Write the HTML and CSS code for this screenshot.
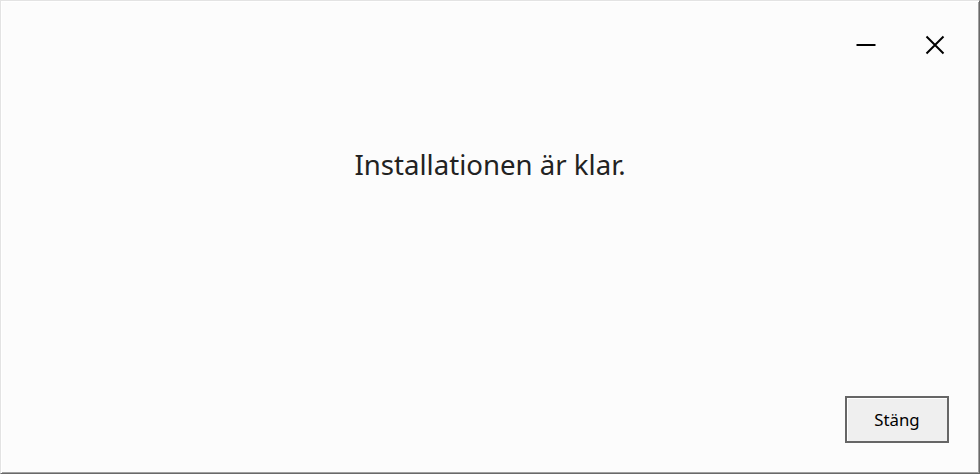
FILE: index.html
```html
<!DOCTYPE html>
<html lang="sv">
<head>
<meta charset="utf-8">
<title>Installation</title>
<link rel="stylesheet" href="styles.css">
</head>
<body>
<div class="window">
  <div class="titlebar">
    <button class="ctl" aria-label="Minimera">
      <svg width="20" height="20" viewBox="0 0 20 20"><rect x="0.5" y="9" width="19" height="2" fill="#000"/></svg>
    </button>
    <button class="ctl" aria-label="Stäng">
      <svg width="20" height="20" viewBox="0 0 20 20"><path d="M1.5 1.5 L18.5 18.5 M18.5 1.5 L1.5 18.5" stroke="#000" stroke-width="2" fill="none"/></svg>
    </button>
  </div>
  <div class="content">
    <p class="message">Installationen är klar.</p>
  </div>
  <div class="footer">
    <button class="btn">Stäng</button>
  </div>
</div>
</body>
</html>
```

FILE: styles.css
```css
html, body {
  margin: 0;
  padding: 0;
  width: 980px;
  height: 474px;
  overflow: hidden;
  background: #fcfcfc;
}

.window {
  box-sizing: border-box;
  width: 980px;
  height: 474px;
  display: flex;
  flex-direction: column;
  background: #fcfcfc;
  border-top: 1px solid #e3e3e3;
  border-left: 1px solid #e3e3e3;
  border-right: 1px solid #696969;
  border-bottom: 1px solid #696969;
  box-shadow: inset 1px 1px 0 #ffffff, inset -1px -1px 0 #a0a0a0;
  font-family: "Noto Sans", "Open Sans", sans-serif;
}

.titlebar {
  display: flex;
  justify-content: flex-end;
  gap: 23px;
  padding: 21px 21px 0 0;
}

.ctl {
  width: 46px;
  height: 46px;
  display: flex;
  align-items: center;
  justify-content: center;
  background: transparent;
  border: 0;
  padding: 0;
}

.ctl svg {
  display: block;
}

.content {
  flex: 1;
}

.message {
  margin: 78px 0 0;
  text-align: center;
  font-size: 27.6px;
  line-height: 36px;
  color: #222222;
}

.footer {
  display: flex;
  justify-content: flex-end;
  padding: 0 30px 30px 0;
}

.btn {
  box-sizing: border-box;
  width: 104px;
  height: 47px;
  border: 2px solid #666666;
  background: #efefef;
  box-shadow: inset 1px 1px 0 #ffffff;
  font-family: "Noto Sans", "Open Sans", sans-serif;
  font-size: 16.8px;
  color: #000;
  padding: 0;
}
```
